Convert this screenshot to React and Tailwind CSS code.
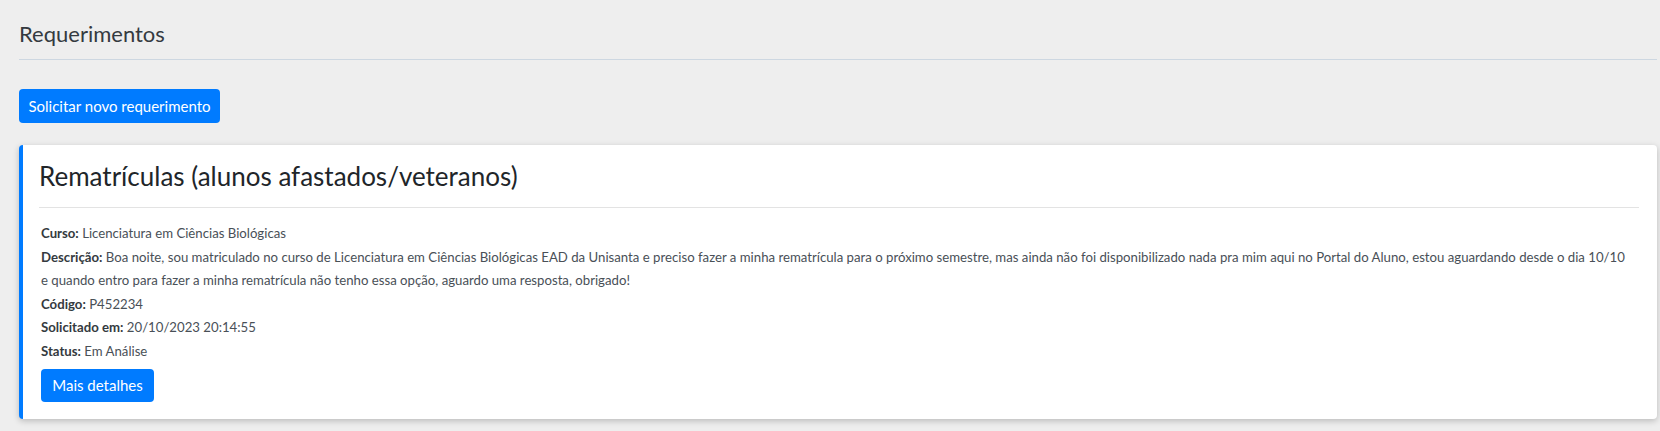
export default function App() {
  return (
    <div className="min-h-[431px] w-full bg-[#eeeeee] pl-[19px] pr-[3px] pt-[20px] text-[#495057] font-['Lato',sans-serif]">
      <h2 className="pb-[11px] text-[22px] leading-[28px] text-[#343a40] border-b border-[#cdd7e1]">
        Requerimentos
      </h2>

      <div className="mt-[29px]">
        <button className="h-[34px] w-[201px] rounded-[4px] bg-[#007bff] text-[15px] text-white">
          Solicitar novo requerimento
        </button>
      </div>

      <div className="mt-[22px] rounded-[4px] border-l-4 border-[#007bff] bg-white pb-[17px] pl-[16px] pr-[18px] pt-[14px] shadow-[0_2px_6px_rgba(0,0,0,0.22)]">
        <h3 className="border-b border-[#e3e3e3] pb-[14px] text-[26px] leading-[34px] text-[#212529]">
          Rematrículas (alunos afastados/veteranos)
        </h3>
        <div className="mt-[14px] pl-[2px] text-[13.2px] leading-[23.5px]">
          <p>
            <span className="font-bold text-[#343a40]">Curso:</span> Licenciatura em Ciências Biológicas
          </p>
          <p>
            <span className="font-bold text-[#343a40]">Descrição:</span> Boa noite, sou matriculado no curso de Licenciatura em Ciências Biológicas EAD da Unisanta e preciso fazer a minha rematrícula para o próximo semestre, mas ainda não foi disponibilizado nada pra mim aqui no Portal do Aluno, estou aguardando desde o dia 10/10
            <br />
            e quando entro para fazer a minha rematrícula não tenho essa opção, aguardo uma resposta, obrigado!
          </p>
          <p>
            <span className="font-bold text-[#343a40]">Código:</span> P452234
          </p>
          <p>
            <span className="font-bold text-[#343a40]">Solicitado em:</span> 20/10/2023 20:14:55
          </p>
          <p>
            <span className="font-bold text-[#343a40]">Status:</span> Em Análise
          </p>
        </div>
        <button className="mt-[6px] ml-[2px] h-[33px] w-[113px] rounded-[4px] bg-[#007bff] text-[15px] text-white">
          Mais detalhes
        </button>
      </div>
    </div>
  );
}
